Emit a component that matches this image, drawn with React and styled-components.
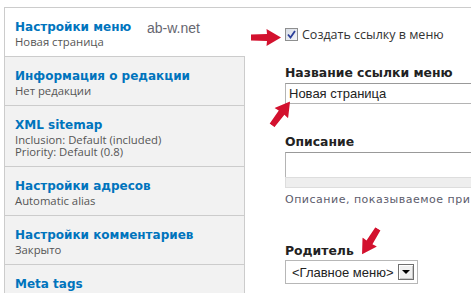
import React from "react";
import styled, { createGlobalStyle } from "styled-components";

const Global = createGlobalStyle`
  html, body { margin: 0; padding: 0; background: #fff; }
  body { width: 471px; height: 293px; overflow: hidden; }
`;

const Page = styled.div`
  position: relative;
  width: 471px;
  height: 293px;
  overflow: hidden;
  padding-top: 7px;
  padding-left: 4px;
  box-sizing: border-box;
`;

const VerticalTabs = styled.div`
  display: flex;
  border-top: 1px solid #cccccc;
  border-left: 1px solid #cccccc;
  height: 300px;
`;

const TabList = styled.ul`
  list-style: none;
  margin: 0;
  padding: 0;
  width: 240px;
  flex: none;
  background: #f2f2f2;
  border-right: 1px solid #cccccc;
  box-sizing: border-box;
  position: relative;
`;

const Tab = styled.li`
  padding: 10px 8px 8px 10px;
  border-bottom: 1px solid #cccccc;
  background: ${(p) => (p.$active ? "#ffffff" : "#f2f2f2")};
  margin-right: ${(p) => (p.$active ? "-1px" : "0")};
`;

const TabTitle = styled.div`
  font-family: "DejaVu Sans", Verdana, sans-serif;
  font-weight: bold;
  font-size: 12px;
  line-height: 18px;
  color: #0074bd;
  white-space: nowrap;
`;

const TabSummary = styled.div`
  font-family: "Open Sans", "Liberation Sans", sans-serif;
  font-size: 11.3px;
  line-height: 12px;
  color: #555555;
  white-space: nowrap;
`;

const Pane = styled.div`
  flex: 1;
  padding: 19px 0 0 40px;
  min-width: 0;
  overflow: hidden;
`;

const CheckRow = styled.label`
  display: flex;
  align-items: center;
  gap: 4px;
  height: 15px;
  font-family: "Open Sans", "Liberation Sans", sans-serif;
  font-size: 12.5px;
  color: #333333;
  white-space: nowrap;
`;

const CheckBox = styled.span`
  width: 13px;
  height: 13px;
  box-sizing: border-box;
  border: 1px solid #8e8f8f;
  background: linear-gradient(135deg, #d8dde6 0%, #f4f5f8 100%);
  display: inline-flex;
  align-items: center;
  justify-content: center;
  flex: none;
`;

const FieldLabel = styled.div`
  font-family: "DejaVu Sans", Verdana, sans-serif;
  font-weight: bold;
  font-size: 12.4px;
  line-height: 15px;
  color: #222222;
  margin-top: ${(p) => p.$top}px;
  white-space: nowrap;
`;

const TextInput = styled.div`
  margin-top: 3px;
  height: 21px;
  box-sizing: border-box;
  border: 1px solid #b4b4b4;
  border-top-color: #999999;
  border-right: none;
  padding: 2px 0 0 3px;
  font-family: "Liberation Sans", Arial, sans-serif;
  font-size: 13px;
  line-height: 15px;
  color: #222222;
  white-space: nowrap;
`;

const TextArea = styled.div`
  margin-top: 3px;
  height: 25px;
  box-sizing: border-box;
  border: 1px solid #b4b4b4;
  border-top-color: #999999;
  border-right: none;
  border-bottom: none;
`;

const Grippie = styled.div`
  height: 11px;
  box-sizing: border-box;
  background: #eeeeee;
  border: 1px solid #dddddd;
  border-right: none;
`;

const Description = styled.div`
  margin-top: 5px;
  font-family: "DejaVu Sans", Verdana, sans-serif;
  font-size: 11px;
  letter-spacing: 0.5px;
  line-height: 14px;
  color: #5c5c6c;
  white-space: nowrap;
`;

const Select = styled.div`
  margin-top: 2px;
  width: 133px;
  height: 24px;
  box-sizing: border-box;
  border: 1px solid #b7b7b7;
  display: flex;
  align-items: center;
  justify-content: space-between;
  padding: 0 3px 0 6px;
  font-family: "Liberation Sans", Arial, sans-serif;
  font-size: 13px;
  color: #222222;
  white-space: nowrap;
`;

const SelectButton = styled.span`
  width: 16px;
  height: 16px;
  box-sizing: border-box;
  border: 1px solid #6f6f6f;
  background: #f0f0f0;
  box-shadow: inset 1px 1px 0 #ffffff, inset -1px -1px 0 #c8c8c8;
  display: inline-flex;
  align-items: center;
  justify-content: center;
`;

const Watermark = styled.div`
  position: absolute;
  left: 147px;
  top: 20px;
  font-family: "Liberation Sans", Arial, sans-serif;
  font-size: 14px;
  line-height: 16px;
  color: #666670;
  pointer-events: none;
`;

const ArrowSvg = styled.svg`
  position: absolute;
  left: ${(p) => p.$cx - 15}px;
  top: ${(p) => p.$cy - 8.5}px;
  transform: rotate(${(p) => p.$angle}deg);
  transform-origin: 50% 50%;
  pointer-events: none;
`;

function Arrow({ cx, cy, angle }) {
  return (
    <ArrowSvg $cx={cx} $cy={cy} $angle={angle} width="30" height="17" viewBox="0 0 30 17">
      <path d="M0 5.5 L16 5 L15.5 0 L30 8.5 L15.5 17 L16 12 L0 11.5 Z" fill="#d3112e" />
    </ArrowSvg>
  );
}

const tabs = [
  { title: "Настройки меню", lines: ["Новая страница"], active: true },
  { title: "Информация о редакции", lines: ["Нет редакции"] },
  { title: "XML sitemap", lines: ["Inclusion: Default (included)", "Priority: Default (0.8)"] },
  { title: "Настройки адресов", lines: ["Automatic alias"] },
  { title: "Настройки комментариев", lines: ["Закрыто"] },
  { title: "Meta tags", lines: [] },
];

export default function App() {
  return (
    <>
      <Global />
      <Page>
        <VerticalTabs>
          <TabList>
            {tabs.map((t) => (
              <Tab key={t.title} $active={t.active}>
                <TabTitle>{t.title}</TabTitle>
                {t.lines.length > 0 && (
                  <TabSummary>
                    {t.lines.map((l, i) => (
                      <React.Fragment key={l}>
                        {i > 0 && <br />}
                        {l}
                      </React.Fragment>
                    ))}
                  </TabSummary>
                )}
              </Tab>
            ))}
          </TabList>
          <Pane>
            <CheckRow>
              <CheckBox>
                <svg width="9" height="9" viewBox="0 0 9 9">
                  <path d="M1 4.5 L3.5 7.5 L8 1" fill="none" stroke="#2b3f9a" strokeWidth="1.8" />
                </svg>
              </CheckBox>
              Создать ссылку в меню
            </CheckRow>
            <FieldLabel $top={23}>Название ссылки меню</FieldLabel>
            <TextInput>Новая страница</TextInput>
            <FieldLabel $top={30}>Описание</FieldLabel>
            <TextArea />
            <Grippie />
            <Description>Описание, показываемое при</Description>
            <FieldLabel $top={36}>Родитель</FieldLabel>
            <Select>
              &lt;Главное меню&gt;
              <SelectButton>
                <svg width="8" height="4" viewBox="0 0 8 4">
                  <path d="M0 0 L8 0 L4 4 Z" fill="#000" />
                </svg>
              </SelectButton>
            </Select>
          </Pane>
        </VerticalTabs>
        <Watermark>ab-w.net</Watermark>
        <Arrow cx={266} cy={37} angle={0} />
        <Arrow cx={281} cy={113} angle={-53} />
        <Arrow cx={370} cy={241} angle={122} />
      </Page>
    </>
  );
}
